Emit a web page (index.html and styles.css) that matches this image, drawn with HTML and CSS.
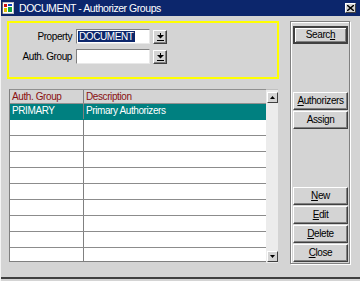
FILE: index.html
```html
<!DOCTYPE html>
<html>
<head>
    <title>DOCUMENT - Authorizer Groups</title>
    <link rel="stylesheet" href="styles.css">
</head>
<body>
<div class="window">
    <div class="titlebar">
        <svg class="app-icon" width="12" height="12" viewBox="0 0 12 12">
            <rect x="0" y="0" width="12" height="12" fill="#c0c0c0"/>
            <rect x="1" y="1" width="10" height="10" fill="#ffffff"/>
            <rect x="2" y="2" width="3" height="3" fill="#d01010"/>
            <rect x="6" y="2" width="4" height="2" fill="#1040c0"/>
            <rect x="2" y="6" width="3" height="4" fill="#e0c000"/>
            <rect x="6" y="5" width="4" height="5" fill="#10a040"/>
            <rect x="0" y="0" width="1" height="12" fill="#606060"/>
        </svg>
        <span class="title">DOCUMENT - Authorizer Groups</span>
        <div class="close-btn">
            <svg width="7" height="6" viewBox="0 0 7 6">
                <path d="M0 0 L7 6 M7 0 L0 6" stroke="#000" stroke-width="1.4"/>
            </svg>
        </div>
    </div>

    <div class="client">
        <div class="left-col">
            <div class="criteria">
                <div class="field-row">
                    <span class="field-label">Property</span>
                    <div class="combo-input"><span class="selected-text">DOCUMENT</span></div>
                    <div class="combo-btn">
                        <svg width="7" height="8" viewBox="0 0 7 8">
                            <rect x="3" y="0" width="1" height="2" fill="#000"/>
                            <path d="M0 2 H7 L3.5 5.5 Z" fill="#000"/>
                            <rect x="0" y="7" width="7" height="1" fill="#000"/>
                        </svg>
                    </div>
                </div>
                <div class="field-row">
                    <span class="field-label">Auth. Group</span>
                    <div class="combo-input"></div>
                    <div class="combo-btn">
                        <svg width="7" height="8" viewBox="0 0 7 8">
                            <rect x="3" y="0" width="1" height="2" fill="#000"/>
                            <path d="M0 2 H7 L3.5 5.5 Z" fill="#000"/>
                            <rect x="0" y="7" width="7" height="1" fill="#000"/>
                        </svg>
                    </div>
                </div>
            </div>

            <div class="grid">
                <div class="grid-body">
                    <div class="grid-head">
                        <div class="cell col-group">Auth. Group</div>
                        <div class="cell col-desc">Description</div>
                    </div>
                    <div class="grid-row selected">
                        <div class="cell col-group">PRIMARY</div>
                        <div class="cell col-desc">Primary Authorizers</div>
                    </div>
                    <div class="grid-row"><div class="cell col-group"></div><div class="cell col-desc"></div></div>
                    <div class="grid-row"><div class="cell col-group"></div><div class="cell col-desc"></div></div>
                    <div class="grid-row"><div class="cell col-group"></div><div class="cell col-desc"></div></div>
                    <div class="grid-row"><div class="cell col-group"></div><div class="cell col-desc"></div></div>
                    <div class="grid-row"><div class="cell col-group"></div><div class="cell col-desc"></div></div>
                    <div class="grid-row"><div class="cell col-group"></div><div class="cell col-desc"></div></div>
                    <div class="grid-row"><div class="cell col-group"></div><div class="cell col-desc"></div></div>
                    <div class="grid-row"><div class="cell col-group"></div><div class="cell col-desc"></div></div>
                    <div class="grid-row last"><div class="cell col-group"></div><div class="cell col-desc"></div></div>
                </div>
                <div class="scrollbar">
                    <div class="scroll-btn">
                        <svg width="5" height="3" viewBox="0 0 5 3"><path d="M2.5 0 L5 3 H0 Z" fill="#000"/></svg>
                    </div>
                    <div class="scroll-track"></div>
                    <div class="scroll-btn">
                        <svg width="5" height="3" viewBox="0 0 5 3"><path d="M0 0 H5 L2.5 3 Z" fill="#000"/></svg>
                    </div>
                </div>
            </div>
        </div>

        <div class="button-panel">
            <div class="btn btn-default">Searc<u>h</u></div>
            <div class="btn-group top-group">
                <div class="btn"><u>A</u>uthorizers</div>
                <div class="btn">Assign</div>
            </div>
            <div class="btn-group bottom-group">
                <div class="btn"><u>N</u>ew</div>
                <div class="btn"><u>E</u>dit</div>
                <div class="btn"><u>D</u>elete</div>
                <div class="btn"><u>C</u>lose</div>
            </div>
        </div>
    </div>
</div>
</body>
</html>
```

FILE: styles.css
```css
* {
    margin: 0;
    padding: 0;
    box-sizing: border-box;
}

body {
    font-family: 'Liberation Sans', Arial, sans-serif;
    font-size: 10px;
    letter-spacing: -0.4px;
    background-color: #d4d4d4;
    color: #000;
    width: 360px;
    height: 281px;
    overflow: hidden;
}

.window {
    width: 360px;
    height: 281px;
    background: #d4d4d4;
    border-left: 1px solid #f4f4f4;
}

.titlebar {
    height: 16px;
    background: #0c266c;
    display: flex;
    align-items: center;
    padding-left: 1px;
}

.app-icon {
    display: block;
    margin-right: 5px;
}

.title {
    color: #fff;
    font-size: 10.5px;
    letter-spacing: -0.45px;
    flex: 1;
}

.close-btn {
    width: 11px;
    height: 10px;
    margin-right: 4px;
    background: #d4d4d4;
    border: 1px solid;
    border-color: #fff #404040 #404040 #fff;
    display: flex;
    justify-content: center;
    align-items: center;
}

.close-btn svg {
    display: block;
}

.client {
    height: 263px;
    display: flex;
    padding: 5px 0 0 6px;
    border-bottom: 2px solid #404040;
}

.left-col {
    width: 272px;
    display: flex;
    flex-direction: column;
}

.criteria {
    height: 58px;
    border: 2px solid #ffff00;
    padding-top: 6px;
    display: flex;
    flex-direction: column;
    gap: 5px;
}

.field-row {
    display: flex;
    align-items: center;
    height: 15px;
}

.field-label {
    width: 63px;
    text-align: right;
    margin-right: 4px;
}

.combo-input {
    width: 74px;
    height: 15px;
    background: #fff;
    border: 1px solid;
    border-color: #808080 #e8e8e8 #e8e8e8 #808080;
    padding: 1px 0 0 1px;
}

.selected-text {
    background: #0c266c;
    color: #fff;
    display: inline-block;
    line-height: 11px;
    padding: 0 1px;
}

.combo-btn {
    width: 14px;
    height: 14px;
    margin-left: 3px;
    border: 1px solid;
    border-color: #fff #404040 #404040 #fff;
    box-shadow: inset -1px -1px #808080;
    display: flex;
    justify-content: center;
    align-items: center;
}

.combo-btn svg {
    display: block;
}

.grid {
    margin: 10px 0 0 2px;
    height: 174px;
    display: flex;
}

.grid-body {
    width: 257px;
    height: 173px;
    border-left: 1px solid #808080;
    border-top: 1px solid #909090;
    border-bottom: 1px solid #808080;
    overflow: hidden;
}

.grid-head {
    height: 14px;
    display: flex;
    background: #d4d4d4;
    color: #8a1010;
    border-bottom: 1px solid #909090;
}

.grid-row {
    height: 16px;
    display: flex;
    background: #fff;
    border-bottom: 1px solid #8c8c8c;
}

.grid-row.selected {
    background: #008080;
    color: #fff;
    border-bottom-color: #008080;
}

.grid-row.last {
    border-bottom: none;
}

.cell {
    padding-left: 2px;
    line-height: 14px;
    white-space: nowrap;
}

.col-group {
    width: 74px;
    border-right: 1px solid #808080;
}

.col-desc {
    flex: 1;
}

.scrollbar {
    width: 12px;
    display: flex;
    flex-direction: column;
    background: #ececec;
    border-top: 1px solid #c0c0c0;
    padding: 2px 0 1px 1px;
}

.scroll-btn {
    width: 11px;
    height: 11px;
    background: #d4d4d4;
    border: 1px solid;
    border-color: #fff #404040 #404040 #fff;
    display: flex;
    justify-content: center;
    align-items: center;
}

.scroll-btn svg {
    display: block;
}

.scroll-track {
    flex: 1;
}

.button-panel {
    width: 60px;
    height: 243px;
    margin-left: 11px;
    border: 1px solid #808080;
    box-shadow: inset 1px 1px #fff, 1px 1px #fff;
    display: flex;
    flex-direction: column;
    padding: 4px 0 1px 2px;
}

.btn {
    width: 55px;
    height: 18px;
    border: 1px solid;
    border-color: #fff #404040 #404040 #fff;
    box-shadow: inset -1px -1px #808080;
    text-align: center;
    line-height: 16px;
}

.btn u {
    text-decoration: underline;
}

.btn-default {
    height: 18px;
    border: 2px solid #404040;
    box-shadow: inset 1px 1px #fff, inset -1px -1px #808080;
    line-height: 14px;
}

.btn-group {
    display: flex;
    flex-direction: column;
    gap: 1px;
}

.top-group {
    margin-top: 48px;
}

.bottom-group {
    margin-top: auto;
}
```
